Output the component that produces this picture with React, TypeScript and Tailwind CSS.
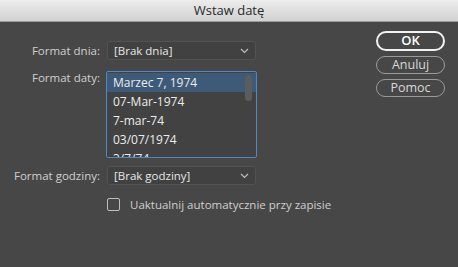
import React from "react";

function Chevron() {
  return (
    <svg width="9" height="6" viewBox="0 0 9 6" className="shrink-0">
      <path d="M1 1 L4.5 4.5 L8 1" fill="none" stroke="#bdbdbd" strokeWidth="1.2" />
    </svg>
  );
}

function Select({ value }: { value: string }) {
  return (
    <div className="flex h-[19px] w-[149px] items-center justify-between rounded-[3px] border border-[#525252] bg-[#414141] pl-[6px] pr-[6px] text-[11.5px] text-[#e6e6e6]">
      <span>{value}</span>
      <Chevron />
    </div>
  );
}

export default function App() {
  const items = ["Marzec 7, 1974", "07-Mar-1974", "7-mar-74", "03/07/1974", "3/7/74"];
  return (
    <div
      className="flex h-[267px] w-[458px] flex-col bg-[#474747]"
      style={{ fontFamily: '"Open Sans", "Noto Sans", sans-serif' }}
    >
      <div className="flex h-[22px] items-center justify-center border-b border-[#9a9a9a] bg-gradient-to-b from-[#ececec] to-[#d2d2d2] text-[13px] text-[#2a2a2a]">
        Wstaw datę
      </div>
      <div className="flex flex-1">
        <div className="flex flex-col pt-[19px]">
          <div className="flex items-center">
            <div className="w-[100px] text-right text-[11.5px] text-[#cfcfcf]">Format dnia:</div>
            <div className="ml-[7px]">
              <Select value="[Brak dnia]" />
            </div>
          </div>
          <div className="mt-[11px] flex items-start">
            <div className="w-[100px] text-right text-[11.5px] leading-[14px] text-[#cfcfcf]">Format daty:</div>
            <div className="relative ml-[6px] h-[87px] w-[151px] overflow-hidden rounded-[2px] border border-[#4f86c6] bg-[#424242]">
              {items.map((it, i) => (
                <div
                  key={it}
                  className={
                    "flex h-[19px] items-center pl-[6px] text-[12px] text-[#ececec] " +
                    (i === 0 ? "mt-[1px] bg-[#3e5a79]" : "")
                  }
                >
                  {it}
                </div>
              ))}
              <div className="absolute right-[4px] top-[3px] h-[26px] w-[7px] rounded-full bg-[#5c5c5c]" />
            </div>
          </div>
          <div className="mt-[8px] flex items-center">
            <div className="w-[100px] text-right text-[11.5px] text-[#cfcfcf]">Format godziny:</div>
            <div className="ml-[7px]">
              <Select value="[Brak godziny]" />
            </div>
          </div>
          <div className="ml-[107px] mt-[11px] flex items-center">
            <div className="h-[13px] w-[13px] rounded-[2px] border border-[#bdbdbd] bg-[#474747]" />
            <span className="ml-[10px] text-[11.5px] text-[#cfcfcf]">Uaktualnij automatycznie przy zapisie</span>
          </div>
        </div>
        <div className="ml-auto mr-[13px] mt-[9px] flex w-[69px] flex-col gap-[5px]">
          <div className="flex h-[20px] items-center justify-center rounded-full border-2 border-[#f2f2f2] text-[13px] font-semibold text-[#ffffff]">
            OK
          </div>
          <div className="flex h-[18px] items-center justify-center rounded-full border border-[#9a9a9a] text-[12.5px] text-[#d8d8d8]">
            Anuluj
          </div>
          <div className="flex h-[18px] items-center justify-center rounded-full border border-[#9a9a9a] text-[12.5px] text-[#d8d8d8]">
            Pomoc
          </div>
        </div>
      </div>
    </div>
  );
}
